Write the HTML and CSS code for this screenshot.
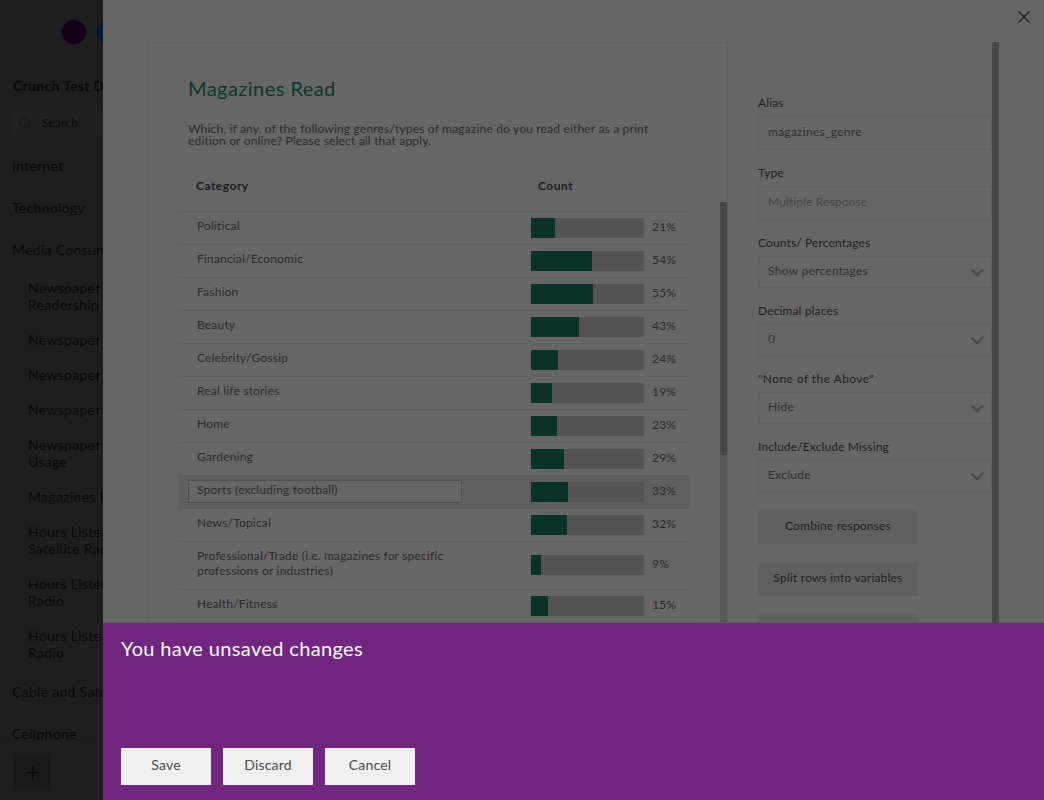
FILE: index.html
```html
<!DOCTYPE html>
<html lang="en">
<head>
<meta charset="utf-8">
<title>Magazines Read</title>
<link rel="stylesheet" href="styles.css">
</head>
<body>
<div class="app">
  <aside class="sidebar">
    <div class="dots"><span class="dot dot-purple"></span><span class="dot dot-blue"></span></div>
    <h1 class="dataset">Crunch Test Dataset</h1>
    <div class="search">
      <svg class="search-icon" width="13" height="13" viewBox="0 0 13 13"><circle cx="5.3" cy="5.3" r="4.6"/><path d="M8.6 8.6L12.3 12.3"/></svg>
      <span class="search-text">Search</span>
    </div>
    <nav class="tree">
      <div class="group">Internet</div>
      <div class="group">Technology</div>
      <div class="group">Media Consumption</div>
      <div class="nested">
        <div>Newspaper<br>Readership</div>
        <div>Newspaper</div>
        <div>Newspaper</div>
        <div>Newspaper</div>
        <div>Newspaper<br>Usage</div>
        <div>Magazines Read</div>
        <div>Hours Listened<br>Satellite Radio</div>
        <div>Hours Listened<br>Radio</div>
        <div>Hours Listened<br>Radio</div>
      </div>
      <div class="group">Cable and Satellite</div>
      <div class="group">Cellphone</div>
    </nav>
    <div class="sidebar-foot">
      <div class="add"><svg width="13" height="13" viewBox="0 0 13 13"><path d="M6.5 0V13M0 6.5H13"/></svg></div>
    </div>
  </aside>
  <div class="main">
    <div class="content">
      <section class="card">
        <div class="card-head">
          <h2 class="title">Magazines Read</h2>
          <p class="question">Which, if any, of the following genres/types of magazine do you read either as a print<br>edition or online? Please select all that apply.</p>
        </div>
        <div class="table">
          <div class="thead"><span class="th-cat">Category</span><span class="th-count">Count</span></div>
          <div class="row"><div class="cat">Political</div><div class="bar"><i style="width:24px"></i></div><div class="pct">21%</div></div>
          <div class="row"><div class="cat">Financial/Economic</div><div class="bar"><i style="width:61px"></i></div><div class="pct">54%</div></div>
          <div class="row"><div class="cat">Fashion</div><div class="bar"><i style="width:62px"></i></div><div class="pct">55%</div></div>
          <div class="row"><div class="cat">Beauty</div><div class="bar"><i style="width:48px"></i></div><div class="pct">43%</div></div>
          <div class="row"><div class="cat">Celebrity/Gossip</div><div class="bar"><i style="width:27px"></i></div><div class="pct">24%</div></div>
          <div class="row"><div class="cat">Real life stories</div><div class="bar"><i style="width:21px"></i></div><div class="pct">19%</div></div>
          <div class="row"><div class="cat">Home</div><div class="bar"><i style="width:26px"></i></div><div class="pct">23%</div></div>
          <div class="row"><div class="cat">Gardening</div><div class="bar"><i style="width:33px"></i></div><div class="pct">29%</div></div>
          <div class="row active"><div class="cat edit">Sports (excluding football)</div><div class="bar"><i style="width:37px"></i></div><div class="pct">33%</div></div>
          <div class="row"><div class="cat">News/Topical</div><div class="bar"><i style="width:36px"></i></div><div class="pct">32%</div></div>
          <div class="row tall"><div class="cat">Professional/Trade (i.e. magazines for specific<br>professions or industries)</div><div class="bar"><i style="width:10px"></i></div><div class="pct">9%</div></div>
          <div class="row"><div class="cat">Health/Fitness</div><div class="bar"><i style="width:17px"></i></div><div class="pct">15%</div></div>
        </div>
        <div class="scroll"><div class="thumb"></div></div>
      </section>
      <section class="props">
        <label class="label">Alias</label>
        <div class="field">magazines_genre</div>
        <label class="label">Type</label>
        <div class="field muted">Multiple Response</div>
        <label class="label">Counts/ Percentages</label>
        <div class="field select">Show percentages<svg class="chev" width="14" height="9" viewBox="0 0 14 9"><path d="M1.4 1.5L7 7L12.6 1.5"/></svg></div>
        <label class="label">Decimal places</label>
        <div class="field select">0<svg class="chev" width="14" height="9" viewBox="0 0 14 9"><path d="M1.4 1.5L7 7L12.6 1.5"/></svg></div>
        <label class="label label-wide">"None of the Above"</label>
        <div class="field select">Hide<svg class="chev" width="14" height="9" viewBox="0 0 14 9"><path d="M1.4 1.5L7 7L12.6 1.5"/></svg></div>
        <label class="label">Include/Exclude Missing</label>
        <div class="field select">Exclude<svg class="chev" width="14" height="9" viewBox="0 0 14 9"><path d="M1.4 1.5L7 7L12.6 1.5"/></svg></div>
        <div class="actions">
          <div class="action">Combine responses</div>
          <div class="action">Split rows into variables</div>
          <div class="action"></div>
        </div>
      </section>
      <div class="page-scroll"></div>
      <svg class="close" width="12" height="12" viewBox="0 0 12 12"><path d="M.5 .5L11.5 11.5M11.5 .5L.5 11.5"/></svg>
    </div>
    <footer class="unsaved">
      <h3 class="unsaved-title">You have unsaved changes</h3>
      <div class="buttons">
        <div class="btn">Save</div>
        <div class="btn">Discard</div>
        <div class="btn">Cancel</div>
      </div>
    </footer>
  </div>
</div>
</body>
</html>
```
FILE: styles.css
```css
* { box-sizing: border-box; }
body { margin: 0; font-family: Lato, "Liberation Sans", sans-serif; font-size: 12px; letter-spacing: .18px; color: #2b2b2b; }
h1, h2, h3, p { margin: 0; font-weight: 400; }
svg { fill: none; flex: none; }
.app { display: flex; width: 1044px; height: 800px; overflow: hidden; background: #666; }

.sidebar { width: 103px; height: 800px; overflow: hidden; background: #1e1e1e; color: #0a0a0a; display: flex; flex-direction: column; flex: none; white-space: nowrap; }
.dots { display: flex; gap: 10px; padding: 20px 0 0 62px; flex: none; }
.dot { width: 24px; height: 24px; border-radius: 50%; flex: none; }
.dot-purple { background: #14001a; }
.dot-blue { background: #001d33; }
.dataset { font-size: 14px; font-weight: 700; line-height: 18px; letter-spacing: .3px; margin: 33px 0 0 13px; }
.search { display: flex; align-items: center; height: 24px; margin: 16px 0 0 12px; padding-left: 7px; background: #202020; flex: none; }
.search-icon { stroke: #131313; stroke-width: 1; }
.search-text { margin-left: 10px; padding-bottom: 2px; font-size: 12px; letter-spacing: .1px; }
.tree { flex: none; height: 605px; overflow: hidden; padding: 22px 0 0 12px; font-size: 14px; line-height: 17px; letter-spacing: .3px; }
.group { margin-bottom: 25px; }
.nested { display: flex; flex-direction: column; gap: 18px; margin: -4px 0 22px; padding-left: 16px; }
.sidebar-foot { border-top: 1px solid #1b1b1b; padding: 12px 0 0 13px; }
.add { width: 38px; height: 38px; background: #1a1a1a; display: flex; align-items: center; justify-content: center; }
.add svg { stroke: #080808; stroke-width: 1.3; }

.main { flex: 1; display: flex; flex-direction: column; }
.content { height: 623px; display: flex; align-items: flex-start; overflow: hidden; position: relative; padding: 42px 0 0 45px; }
.card { width: 580px; height: 700px; border: 1px solid #606060; flex: none; position: relative; }
.card-head { padding: 32px 0 0 39px; }
.title { font-size: 20px; line-height: 26px; color: #0a3a2b; letter-spacing: .45px; }
.question { margin-top: 22px; font-size: 12px; line-height: 12px; white-space: nowrap; }
.table { margin: 27px 0 0 30px; width: 511px; }
.thead { height: 38px; border-bottom: 1px solid #5f5f5f; padding: 4px 0 0 17px; display: flex; font-weight: 700; line-height: 16px; letter-spacing: .5px; color: #1c1c1c; }
.th-cat { width: 342px; }
.row { display: flex; height: 33px; padding-left: 9px; border-bottom: 1px solid #5f5f5f; align-items: flex-start; }
.cat { width: 274px; margin-right: 69px; padding: 6px 0 0 9px; line-height: 15px; white-space: nowrap; }
.bar { width: 113px; height: 20px; margin-top: 6px; background: #545454; flex: none; }
.bar i { display: block; height: 20px; background: #0a3329; }
.pct { padding: 7px 0 0 8px; line-height: 15px; }
.active { background: #5f5f5f; box-shadow: 0 -1px #5f5f5f; }
.edit { border: 1px solid #505050; background: #666; height: 23px; margin-top: 4px; padding: 1px 0 0 8px; }
.tall { height: 48px; }
.tall .bar { margin-top: 13px; }
.tall .pct { padding-top: 14px; }
.scroll { position: absolute; right: 0; top: 159px; width: 7px; height: 500px; background: #585858; }
.thumb { height: 253px; background: #484848; }

.props { width: 234px; margin-left: 30px; padding-top: 53px; flex: none; color: #1f1f1f; }
.label { display: block; line-height: 16px; margin-bottom: 5px; white-space: nowrap; letter-spacing: .13px; }
.label-wide { letter-spacing: .42px; }
.field { height: 34px; border: 1px solid #606060; padding: 0 7px 4px 9px; margin-bottom: 15px; display: flex; align-items: center; justify-content: space-between; color: #303030; letter-spacing: .27px; }
.select { height: 32px; }
.muted { color: #474747; letter-spacing: .12px; }
.chev { stroke: #484848; stroke-width: 2.4; position: relative; top: 2px; }
.actions { display: flex; flex-direction: column; gap: 18px; margin-top: 18px; }
.action { width: 160px; height: 34px; padding-bottom: 4px; background: #606060; display: flex; align-items: center; justify-content: center; flex: none; }
.page-scroll { width: 7px; height: 600px; background: #484848; flex: none; }
.close { position: absolute; left: 915px; top: 11px; stroke: #222; stroke-width: 1.3; }

.unsaved { height: 177px; background: #71277f; padding: 12px 18px; }
.unsaved-title { color: #fff; font-size: 20px; line-height: 26px; letter-spacing: .36px; }
.buttons { display: flex; gap: 12px; margin-top: 87px; }
.btn { width: 90px; height: 37px; padding-bottom: 4px; background: #f0f0f0; color: #4a4a4a; font-size: 14px; display: flex; align-items: center; justify-content: center; }
```
